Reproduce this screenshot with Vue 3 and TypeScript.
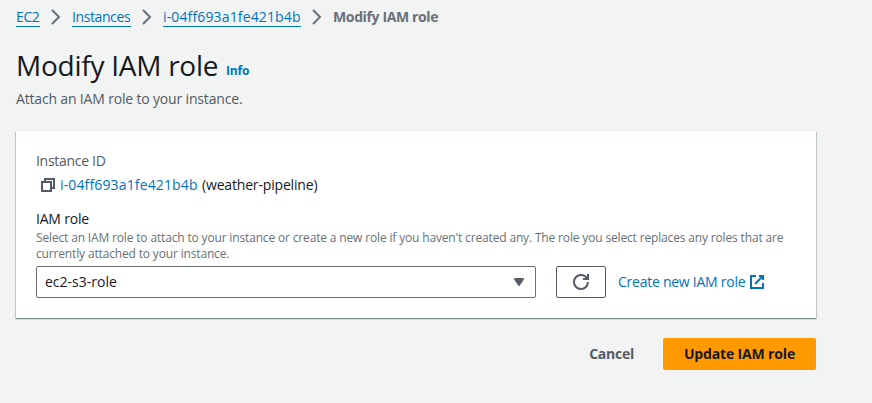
<script setup lang="ts">
interface Crumb {
  text: string
  cls: string
}

const crumbs: Crumb[] = [
  { text: 'EC2', cls: 'c-ec2' },
  { text: 'Instances', cls: 'c-instances' },
  { text: 'i-04ff693a1fe421b4b', cls: 'c-id' },
]
const instanceId = 'i-04ff693a1fe421b4b'
const selectedRole = 'ec2-s3-role'
</script>

<template>
  <main class="page">
    <nav class="crumbs">
      <template v-for="c in crumbs" :key="c.text">
        <a class="crumb" :class="c.cls">{{ c.text }}</a>
        <svg class="icon chevron" viewBox="0 0 16 16">
          <path d="m4 1 7 7-7 7" />
        </svg>
      </template>
      <span class="current">Modify IAM role</span>
    </nav>

    <header class="heading">
      <h1>Modify IAM role</h1>
      <a class="info">Info</a>
    </header>
    <p class="desc">Attach an IAM role to your instance.</p>

    <section class="card">
      <div class="label">Instance ID</div>
      <div class="instance">
        <svg class="icon" viewBox="0 0 16 16">
          <path d="M2 5h9v9H2z" />
          <path d="M5 5V2h9v9h-3" />
        </svg>
        <a class="id-link">{{ instanceId }}</a>
        <span class="name">(weather-pipeline)</span>
      </div>
      <div class="field-label">IAM role</div>
      <div class="hint">
        <div>Select an IAM role to attach to your instance or create a new role if you haven't created any. The role you select replaces any roles that are</div>
        <div>currently attached to your instance.</div>
      </div>
      <div class="row">
        <div class="select">
          <span>{{ selectedRole }}</span>
          <svg class="icon caret" viewBox="0 0 16 16">
            <path d="M4 5h8l-4 6-4-6z" />
          </svg>
        </div>
        <button class="refresh" type="button" aria-label="Refresh">
          <svg class="icon" viewBox="0 0 16 16">
            <path d="M10 5h5V0" />
            <path d="M15 8a6.957 6.957 0 0 1-7 7 6.957 6.957 0 0 1-7-7 6.957 6.957 0 0 1 7-7 6.87 6.87 0 0 1 6.3 4" />
          </svg>
        </button>
        <a class="create">Create new IAM role</a>
        <svg class="icon ext" viewBox="0 0 16 16">
          <path d="M10 2h4v4" />
          <path d="m6 10 8-8" />
          <path d="M14 9.048V14H2V2h5" />
        </svg>
      </div>
    </section>

    <footer class="actions">
      <button class="cancel" type="button">Cancel</button>
      <button class="primary" type="button">Update IAM role</button>
    </footer>
  </main>
</template>

<style>
body {
  background: #f2f3f3;
}
</style>

<style scoped>
.page {
  box-sizing: border-box;
  width: 832px;
  height: 403px;
  padding: 7px 16px 0;
  font-family: 'Open Sans', 'Noto Sans', sans-serif;
  font-size: 14px;
  line-height: 20px;
  color: #16191f;
  white-space: nowrap;
}
a {
  color: #0073bb;
}
.icon {
  flex: none;
  width: 16px;
  height: 16px;
  overflow: visible;
  fill: none;
  stroke: #545b64;
  stroke-width: 2;
}
.crumbs {
  display: flex;
  align-items: center;
  height: 20px;
}
.crumb {
  box-sizing: border-box;
  height: 20px;
  border-bottom: 1px solid #0073bb;
}
.c-ec2 { width: 24px; letter-spacing: -0.4px; }
.c-instances { width: 59px; letter-spacing: -0.4px; }
.c-id { width: 138px; letter-spacing: 0.14px; }
.chevron {
  margin: 0 8px;
  stroke: #687078;
}
.current {
  color: #687078;
  font-weight: 700;
  letter-spacing: -0.37px;
}
.heading {
  display: flex;
  align-items: flex-start;
  height: 36px;
  margin-top: 20px;
}
h1 {
  margin: 0;
  width: 210px;
  font-size: 28px;
  line-height: 36px;
  font-weight: 400;
  letter-spacing: -0.25px;
}
.info {
  margin-top: 14px;
  font-size: 12px;
  font-weight: 700;
  letter-spacing: -0.2px;
}
.desc {
  margin: 6px 0 0;
  color: #545b64;
  letter-spacing: -0.17px;
}
.card {
  box-sizing: border-box;
  width: 800px;
  height: 187px;
  margin-top: 22px;
  padding: 20px;
  background: #fff;
  box-shadow: 0 -1px 0 0 #eaeded, 0 1px 1px 0 rgba(0, 28, 36, 0.3), 1px 1px 1px 0 rgba(0, 28, 36, 0.15), -1px 1px 1px 0 rgba(0, 28, 36, 0.15);
}
.label {
  color: #545b64;
  letter-spacing: -0.3px;
}
.instance {
  display: flex;
  align-items: center;
  height: 20px;
  margin-top: 4px;
  padding-left: 4px;
}
.id-link {
  width: 142px;
  margin-left: 4px;
  letter-spacing: 0.14px;
}
.name {
  letter-spacing: -0.17px;
}
.field-label {
  margin-top: 14px;
  letter-spacing: -0.2px;
}
.hint {
  padding-top: 1px;
  color: #687078;
  font-size: 12px;
  line-height: 16px;
  letter-spacing: -0.157px;
}
.row {
  display: flex;
  align-items: center;
  margin-top: 4px;
}
.select {
  box-sizing: border-box;
  display: flex;
  align-items: center;
  justify-content: space-between;
  width: 500px;
  height: 32px;
  padding: 0 8px;
  border: 1px solid #687078;
  border-radius: 2px;
}
.caret {
  fill: #545b64;
  stroke-linejoin: round;
}
.refresh {
  box-sizing: border-box;
  display: flex;
  align-items: center;
  justify-content: center;
  width: 50px;
  height: 32px;
  margin-left: 20px;
  padding: 0;
  background: #fff;
  border: 1px solid #545b64;
  border-radius: 2px;
}
.create {
  width: 131px;
  margin-left: 12px;
  letter-spacing: -0.25px;
}
.ext {
  stroke: #0073bb;
}
.actions {
  display: flex;
  justify-content: flex-end;
  align-items: center;
  margin-top: 20px;
}
button {
  font: inherit;
  font-weight: 700;
}
.cancel {
  padding: 0;
  margin-right: 29px;
  border: 0;
  background: none;
  color: #545b64;
  letter-spacing: -0.25px;
}
.primary {
  width: 153px;
  height: 32px;
  padding: 0;
  border: 0;
  border-radius: 2px;
  background: #ff9900;
  color: #16191f;
  letter-spacing: -0.15px;
}
</style>
